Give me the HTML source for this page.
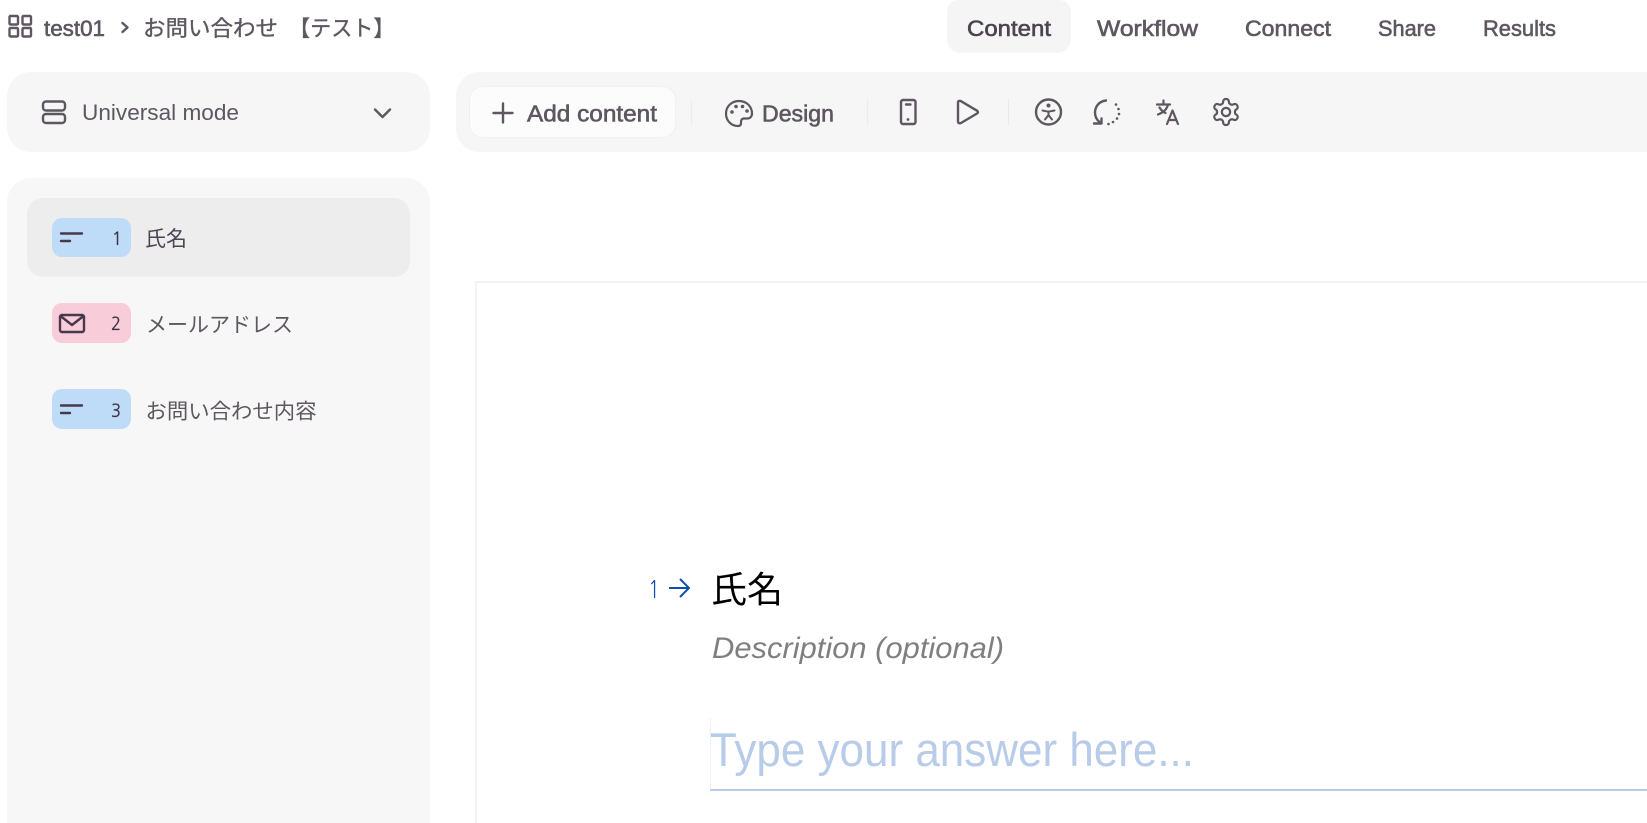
<!DOCTYPE html>
<html lang="ja">
<head>
<meta charset="utf-8">
<title>test01</title>
<style>
html,body{margin:0;padding:0;background:#fff;width:1647px;height:823px;overflow:hidden}
#root{position:relative;width:1647px;height:823px;overflow:hidden;background:#fff}
.p{position:absolute}
svg{position:absolute;left:0;top:0}
text{font-family:"Liberation Sans","Noto Sans CJK JP",sans-serif;fill:#5e5660}
text.n{font-family:"NanumGothic","Liberation Sans",sans-serif;fill:#3f3444;stroke:#3f3444;stroke-width:.3px}
.sb{stroke:#5e5660;stroke-width:.6px}
.ic{fill:none;stroke:#5e5660;stroke-width:2.2;stroke-linecap:round;stroke-linejoin:round}
.bd{fill:none;stroke:#47384d;stroke-width:2.4;stroke-linecap:round;stroke-linejoin:round}
</style>
</head>
<body>
<div id="root">
<div class="p" style="left:947px;top:0;width:124px;height:53px;background:#f5f5f5;border-radius:12px 12px 14px 14px"></div>
<div class="p" style="left:7px;top:72px;width:423px;height:80px;background:#f6f6f6;border-radius:24px"></div>
<div class="p" style="left:456px;top:72px;width:1191px;height:80px;background:#f6f6f6;border-radius:24px 0 0 24px"></div>
<div class="p" style="left:469px;top:86px;width:207px;height:52px;background:#fcfcfc;border:1px solid #f0f0f0;box-sizing:border-box;border-radius:14px"></div>
<div class="p" style="left:7px;top:178px;width:423px;height:645px;background:#f7f7f7;border-radius:24px 24px 0 0"></div>
<div class="p" style="left:27px;top:198px;width:383px;height:79px;background:#ededed;border-radius:16px"></div>
<div class="p" style="left:52px;top:218px;width:79px;height:39px;background:#bedcf8;border-radius:10px"></div>
<div class="p" style="left:52px;top:303px;width:79px;height:40px;background:#f9ccd9;border-radius:10px"></div>
<div class="p" style="left:52px;top:389px;width:79px;height:40px;background:#bedcf8;border-radius:10px"></div>
<div class="p" style="left:475px;top:281px;width:1172px;height:542px;border-left:2px solid #f3f3f3;border-top:2px solid #f3f3f3;box-sizing:border-box"></div>
<div class="p" style="left:691px;top:100px;width:1px;height:26px;background:#ececec"></div>
<div class="p" style="left:867px;top:99px;width:1px;height:26px;background:#ececec"></div>
<div class="p" style="left:1008px;top:99px;width:1px;height:26px;background:#e8e8e8"></div>
<div class="p" style="left:710px;top:718px;width:1px;height:71px;background:#ecf0f8"></div>
<div class="p" style="left:710px;top:789px;width:937px;height:2px;background:#b9cbe9"></div>

<svg width="1647" height="823" viewBox="0 0 1647 823" xmlns="http://www.w3.org/2000/svg">
<!-- breadcrumb -->
<g class="ic" style="stroke-width:2.4">
<rect x="9.500" y="16" width="8.500" height="8.500" rx="1"/><rect x="22.500" y="16" width="8.500" height="8.500" rx="1"/>
<rect x="9.500" y="28" width="8.500" height="8.500" rx="1"/><rect x="22.500" y="28" width="8.500" height="8.500" rx="1"/>
<path d="M122.500 23l5 4.500-5 4.500"/>
</g>
<text class="sb" x="44" y="36" font-size="22" textLength="61" lengthAdjust="spacingAndGlyphs">test01</text>
<text class="sb" x="143" y="36" font-size="22" style="stroke-width:.35px" textLength="135" lengthAdjust="spacingAndGlyphs">お問い合わせ</text>
<text class="sb" x="289" y="36" font-size="22" style="stroke-width:.35px" textLength="105.500" lengthAdjust="spacingAndGlyphs">【テスト】</text>

<!-- tabs -->
<text class="sb" x="967" y="36" font-size="22" style="fill:#4c4450;stroke:#4c4450" textLength="84" lengthAdjust="spacingAndGlyphs">Content</text>
<text class="sb" x="1097" y="36" font-size="22" textLength="101" lengthAdjust="spacingAndGlyphs">Workflow</text>
<text class="sb" x="1245" y="36" font-size="22" textLength="86" lengthAdjust="spacingAndGlyphs">Connect</text>
<text class="sb" x="1378" y="36" font-size="22" textLength="58" lengthAdjust="spacingAndGlyphs">Share</text>
<text class="sb" x="1483" y="36" font-size="22" textLength="73" lengthAdjust="spacingAndGlyphs">Results</text>

<!-- mode -->
<g class="ic" style="stroke-width:2.4">
<rect x="43" y="101.500" width="22" height="9" rx="3"/><rect x="43" y="114" width="22" height="9" rx="3"/>
<path d="M375 109.500l7.500 7.500 7.500-7.500"/>
</g>
<text x="82" y="120" font-size="22" textLength="157" lengthAdjust="spacingAndGlyphs">Universal mode</text>

<!-- toolbar -->
<path class="ic" d="M503 103.500v19M493.500 113h19" style="stroke-width:2.4"/>
<text class="sb" x="527" y="121.500" font-size="23" textLength="130" lengthAdjust="spacingAndGlyphs">Add content</text>
<g class="ic">
<path d="M739 101c-7.500 0-13 5.500-13 12.500S731 126 738 126c2.500 0 3-1.500 3-3 0-2 0-4 2.500-4.500h4c2.500 0 4.500-2 4.500-5C752 106.500 746.500 101 739 101z"/>
</g>
<g fill="#5e5660"><circle cx="732" cy="112" r="1.800"/><circle cx="736" cy="106.500" r="1.800"/><circle cx="742.500" cy="106.500" r="1.800"/><circle cx="747" cy="111" r="1.800"/></g>
<text class="sb" x="762" y="121.500" font-size="23" textLength="72" lengthAdjust="spacingAndGlyphs">Design</text>

<g class="ic" style="stroke-width:2.4">
<rect x="901" y="100" width="14.500" height="24" rx="2"/>
<path d="M906 104.500h4.500"/>
<path d="M958 102.500v19c0 1.500 1.500 2.300 3 1.500l16-9.500c1.300-.8 1.300-2 0-2.800l-16-9.500c-1.500-.8-3-.1-3 1.300z"/>
<circle cx="1048.500" cy="112" r="12.500"/>
<path d="M1042.500 110.500l6 1.200 6-1.200M1048.500 111.500v3.500M1048.500 115l-3.500 4.500M1048.500 115l3.500 4.500" style="stroke-width:2"/>
<path d="M1106 100.500c-6.500.6-11 5.800-11 12 0 3.800 1.700 7.200 4.500 9.500M1094 123.500h7.500v-5" />
<path d="M1157 104.500h13M1163.500 100.500v4M1168 104.500c-1 4.500-4.500 8-10 10M1159.500 107.500c1.500 2.500 3.800 4.500 6 5.500M1167 124l5.500-13.500 5.500 13.500M1169 120h7" style="stroke-width:2.200"/>
</g>
<g class="ic" transform="translate(1210.400,96.400) scale(1.3)" style="stroke-width:1.700">
<path d="M12.220 2h-.44a2 2 0 0 0-2 2v.18a2 2 0 0 1-1 1.730l-.43.25a2 2 0 0 1-2 0l-.15-.08a2 2 0 0 0-2.730.73l-.22.38a2 2 0 0 0 .73 2.730l.15.1a2 2 0 0 1 1 1.720v.51a2 2 0 0 1-1 1.740l-.15.09a2 2 0 0 0-.73 2.730l.22.38a2 2 0 0 0 2.730.73l.15-.08a2 2 0 0 1 2 0l.43.25a2 2 0 0 1 1 1.730V20a2 2 0 0 0 2 2h.44a2 2 0 0 0 2-2v-.18a2 2 0 0 1 1-1.730l.43-.25a2 2 0 0 1 2 0l.15.08a2 2 0 0 0 2.730-.73l.22-.39a2 2 0 0 0-.73-2.730l-.15-.08a2 2 0 0 1-1-1.740v-.5a2 2 0 0 1 1-1.740l.15-.09a2 2 0 0 0 .73-2.730l-.22-.38a2 2 0 0 0-2.730-.73l-.15.08a2 2 0 0 1-2 0l-.43-.25a2 2 0 0 1-1-1.730V4a2 2 0 0 0-2-2z"/>
<circle cx="12" cy="12" r="3.200"/>
</g>
<g fill="#5e5660"><circle cx="908" cy="119.500" r="1.400"/><circle cx="1048.500" cy="105.500" r="2"/>
<circle cx="1116" cy="104.500" r="1.300"/><circle cx="1118.500" cy="109" r="1.300"/><circle cx="1119" cy="114" r="1.300"/><circle cx="1117" cy="118.500" r="1.300"/><circle cx="1113" cy="122" r="1.300"/><circle cx="1108.500" cy="124" r="1.300"/></g>

<!-- sidebar -->
<path class="bd" d="M61 233.500h21M61 241h9"/>
<text class="n" x="112" y="245" font-size="18" textLength="10" lengthAdjust="spacingAndGlyphs">1</text>
<text x="145" y="246" font-size="21" style="fill:#4c4450">氏名</text>
<rect class="bd" x="60" y="315" width="24" height="17" rx="2"/>
<path class="bd" d="M60.500 316l11.500 9 11.500-9"/>
<text class="n" x="111" y="330" font-size="18" textLength="10" lengthAdjust="spacingAndGlyphs">2</text>
<text x="146" y="332" font-size="21" textLength="147" lengthAdjust="spacingAndGlyphs">メールアドレス</text>
<path class="bd" d="M61 405.500h21M61 413h9"/>
<text class="n" x="111" y="417" font-size="18" textLength="10" lengthAdjust="spacingAndGlyphs">3</text>
<text x="145.500" y="418.500" font-size="21" textLength="171" lengthAdjust="spacingAndGlyphs">お問い合わせ内容</text>

<!-- question -->
<text class="n" x="648.500" y="598" font-size="24" style="fill:#0f4fb0;stroke:none" textLength="11" lengthAdjust="spacingAndGlyphs">1</text>
<path d="M669 588h20M680 579l9 9-9 9" fill="none" stroke="#0f4fb0" stroke-width="2"/>
<text x="711" y="602" font-size="36" style="fill:#000" textLength="72" lengthAdjust="spacingAndGlyphs">氏名</text>
<text x="712" y="658" font-size="30" font-style="italic" style="fill:#7f7f7f" textLength="292" lengthAdjust="spacingAndGlyphs">Description (optional)</text>
<text x="710" y="766" font-size="47" style="fill:#b8cbe9" textLength="484" lengthAdjust="spacingAndGlyphs">Type your answer here...</text>
</svg>
</div>
</body>
</html>
